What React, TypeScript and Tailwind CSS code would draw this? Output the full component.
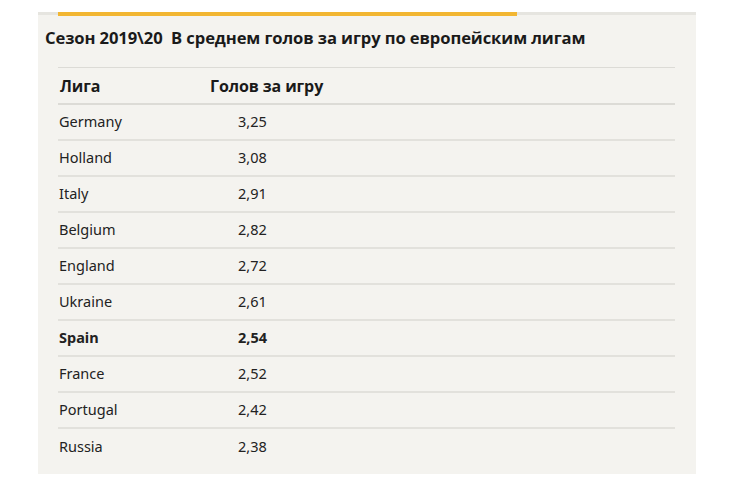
import React from "react";

const rows: { name: string; val: string; bold?: boolean }[] = [
  { name: "Germany", val: "3,25" },
  { name: "Holland", val: "3,08" },
  { name: "Italy", val: "2,91" },
  { name: "Belgium", val: "2,82" },
  { name: "England", val: "2,72" },
  { name: "Ukraine", val: "2,61" },
  { name: "Spain", val: "2,54", bold: true },
  { name: "France", val: "2,52" },
  { name: "Portugal", val: "2,42" },
  { name: "Russia", val: "2,38" },
];

export default function App() {
  return (
    <div className="w-[730px] h-[489px] bg-white pt-[12px] pl-[38px]">
      <div className="w-[658px] h-[462px] bg-[#f4f3ef] border-t-[3px] border-[#e6e5e0] relative">
        <div className="absolute left-[20px] top-[-3px] w-[459px] h-[4px] bg-[#f2b632]" />
        <div
          className="pl-[7px] pt-[11px] h-[52px] text-[16.6px] font-bold font-stretch-[90%] text-[#1a1a1a] whitespace-pre leading-[24px] tracking-[-0.1px]"
          style={{ fontFamily: '"Open Sans", sans-serif' }}
        >
          {"Сезон 2019\\20  В среднем голов за игру по европейским лигам"}
        </div>
        <div className="ml-[20px] w-[617px] border-t border-[#dcdbd6]">
          <div
            className="flex items-center h-[37px] border-b-2 border-[#dcdbd6] text-[16px] font-bold font-stretch-[90%] text-[#1a1a1a] tracking-[-0.1px]"
            style={{ fontFamily: '"Open Sans", sans-serif' }}
          >
            <div className="w-[152px] pl-[2px]">Лига</div>
            <div>Голов за игру</div>
          </div>
          {rows.map((r, i) => (
            <div
              key={r.name}
              className={`flex items-center h-[36px] text-[14.5px] text-[#222] ${
                i < rows.length - 1 ? "border-b-2 border-[#e2e1dc]" : ""
              } ${r.bold ? "font-bold" : ""}`}
              style={{ fontFamily: '"Noto Sans", "Open Sans", sans-serif' }}
            >
              <div className="w-[180px] pl-[1px]">{r.name}</div>
              <div>{r.val}</div>
            </div>
          ))}
        </div>
      </div>
    </div>
  );
}
